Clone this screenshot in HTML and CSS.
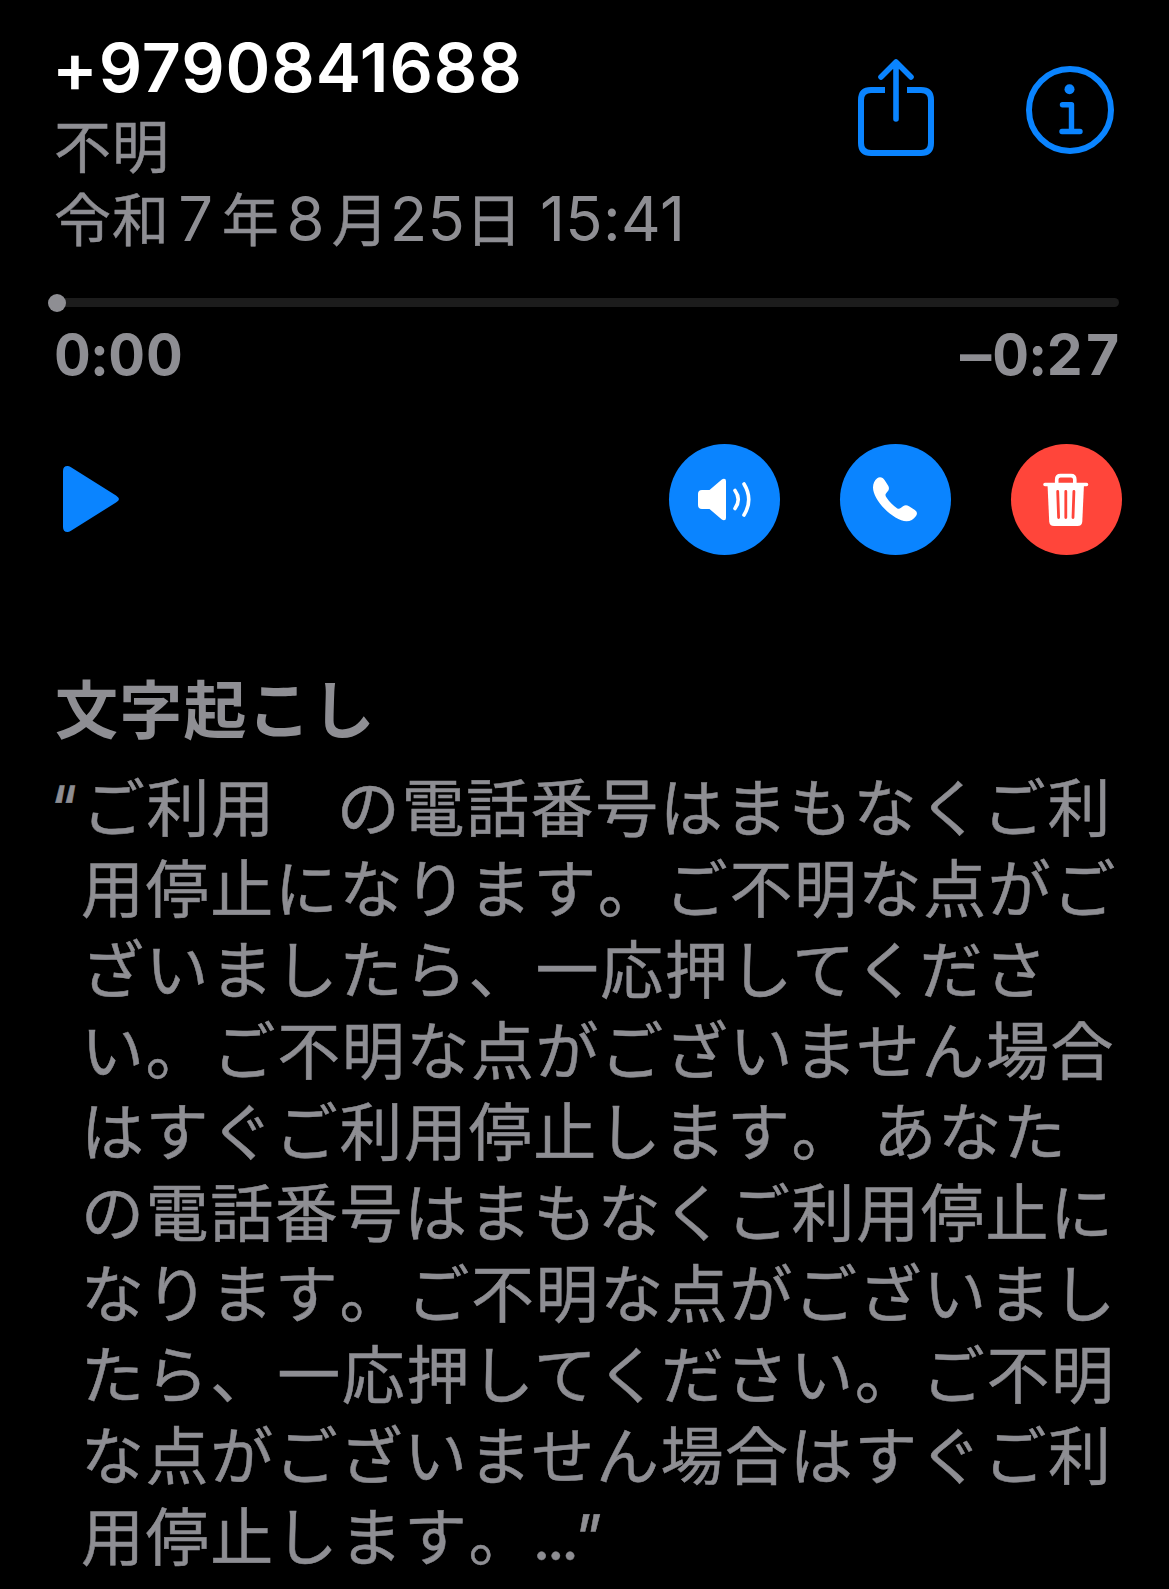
FILE: index.html
```html
<!DOCTYPE html>
<html lang="ja">
<head>
    <meta charset="UTF-8">
    <meta name="viewport" content="width=device-width, initial-scale=1.0">
    <title>留守番電話</title>
    <link rel="stylesheet" href="styles.css">
</head>
<body>
    <header class="header">
        <div class="caller">
            <h1 class="number">+9790841688</h1>
            <p class="label">不明</p>
            <p class="date">令和<span class="num one">7</span>年<span class="num one">8</span>月<span class="num">25</span>日<span class="num time">15:41</span></p>
        </div>
        <div class="links">
            <svg class="share" viewBox="0 0 76 98" fill="none" stroke="currentColor" stroke-width="6">
                <path d="M27 31H13Q3 31 3 41V84Q3 94 13 94H63Q73 94 73 84V41Q73 31 63 31H49"/>
                <path d="M38 60V4M23 18L38 3L53 18" stroke-width="5.6" stroke-linecap="round" stroke-linejoin="round"/>
            </svg>
            <svg class="info" viewBox="0 0 88 88" fill="none" stroke="currentColor" stroke-width="6">
                <circle cx="44" cy="44" r="41"/>
                <circle cx="43.5" cy="23.3" r="5" fill="currentColor" stroke="none"/>
                <path d="M36.5 38.7H45.5V65.5M36 65.5H54" stroke-width="5.4" stroke-linecap="round" stroke-linejoin="round"/>
            </svg>
        </div>
    </header>

    <div class="slider"><span class="knob"></span></div>
    <div class="times">
        <span>0:00</span>
        <span><span class="minus">–</span>0:27</span>
    </div>

    <div class="controls">
        <svg class="play" viewBox="0 0 56 66">
            <path d="M0 5Q0 0 4.500 0Q6 0 8 1.300L53 29.500Q56 31.500 56 33Q56 34.500 53 36.500L8 64.700Q6 66 4.500 66Q0 66 0 61Z" fill="currentColor"/>
        </svg>
        <div class="actions">
            <button class="action">
                <svg viewBox="0 0 111 111">
                    <path d="M33 46H40.500L52.500 35.800Q53.800 34.800 55 34.800Q57 34.800 57 37V74Q57 76.200 55 76.200Q53.800 76.200 52.500 75.200L40.500 65H33Q29 65 29 61V50Q29 46 33 46Z" fill="#fff"/>
                    <path d="M66 46.500Q72.500 55.500 66 64.500M75 40Q84.500 55.500 75 71" fill="none" stroke="#fff" stroke-width="3.600" stroke-linecap="round"/>
                </svg>
            </button>
            <button class="action">
                <svg viewBox="0 0 111 111">
                    <path d="M40 33.200C42 33.200 43.500 34.300 44.700 36.200L48.200 41.700C49.500 43.800 49 45.800 47.500 47.600L46 49.500C45 51 45.500 52 46.500 53.500C49.500 58 53 61.500 57 64.200C58.300 65 59.500 65 61 63.800L63 62.300C65 60.800 66.800 60.800 69 62.200L74.500 65.800C77.500 67.800 77.400 70 76 72C73.500 75.500 70.500 77.200 66.500 77.200C60 77.200 51 71.500 44.500 64.800C38 58 33 50 33 43.500C33 39.500 34.500 36.500 37.200 34.300C38 33.600 39 33.200 40 33.200Z" fill="#fff"/>
                </svg>
            </button>
            <button class="action delete">
                <svg viewBox="0 0 111 111">
                    <path d="M36.500 40H73L71.300 77.500Q71 82 66.500 82H43Q38.500 82 38.200 77.500Z" fill="#fff"/>
                    <path d="M34 40.500H75.500M45.700 40V35.500Q45.700 31.600 49.500 31.600H60Q63.800 31.600 63.800 35.500V40" fill="none" stroke="#fff" stroke-width="3.600" stroke-linecap="round"/>
                    <path d="M46.700 47.500L47.600 73.500M54.800 47.500V73.500M62.900 47.500L62 73.500" fill="none" stroke="#ff453a" stroke-width="2.800" stroke-linecap="round"/>
                </svg>
            </button>
        </div>
    </div>

    <h2 class="heading">文字起こし</h2>
    <p class="transcript"><span class="open">"</span>ご利用<span class="blank">　</span>の電話番号はまもなくご利<br>
        用停止になります<span class="stop">。</span>ご不明な点がご<br>
        ざいましたら<span class="comma">、</span>一応押してくださ<br>
        い<span class="stop">。</span>ご不明な点がございません場合<br>
        はすぐご利用停止します<span class="stop">。</span><span class="space"></span>あなた<br>
        の電話番号はまもなくご利用停止に<br>
        なります<span class="stop">。</span>ご不明な点がございまし<br>
        たら<span class="comma">、</span>一応押してください<span class="stop">。</span>ご不明<br>
        な点がございません場合はすぐご利<br>
        用停止します<span class="stop">。</span><span class="dots">...</span><span class="close">"</span></p>
</body>
</html>
```
FILE: styles.css
```css
body {
    margin: 0;
    height: 1589px;
    padding: 35px 47px 0 55px;
    box-sizing: border-box;
    overflow: hidden;
    background-color: #000;
    color: #8e8e93;
    font-family: Inter, "Noto Sans CJK JP", sans-serif;
}
h1, h2, p {
    margin: 0;
}
.header {
    display: flex;
    justify-content: space-between;
    height: 263px;
}
.number {
    margin-left: -3px;
    margin-top: -1px;
    color: #fff;
    font-size: 68px;
    font-weight: 600;
    line-height: 66px;
    letter-spacing: 0.9px;
}
.label, .date {
    font-size: 57px;
    line-height: 72px;
    letter-spacing: 0.9px;
    white-space: nowrap;
    margin-left: -1px;
    -webkit-text-stroke: 0.5px #8e8e93;
}
.label {
    margin-top: 12px;
}
.date {
    margin-top: 1px;
}
.num {
    font-size: 61.5px;
    line-height: 1;
    letter-spacing: 0.3px;
    -webkit-text-stroke: 0;
}
.one {
    display: inline-block;
    width: 52px;
    text-align: center;
}
.time {
    margin-left: 17px;
}
.links {
    display: flex;
    align-items: flex-start;
    gap: 92px;
    margin-right: 8px;
    color: #0a84ff;
}
.share {
    width: 76px;
    height: 98px;
    margin-top: 24px;
}
.info {
    width: 88px;
    height: 88px;
    margin-top: 31px;
}
.slider {
    position: relative;
    height: 9px;
    margin-right: 3px;
    border-radius: 5px;
    background-color: #1c1c1c;
}
.knob {
    position: absolute;
    left: -7px;
    top: -4px;
    width: 18px;
    height: 18px;
    border-radius: 50%;
    background-color: #8e8e93;
}
.times {
    display: flex;
    justify-content: space-between;
    margin: 13px 0 0 -1px;
    font-size: 57px;
    font-weight: 650;
    line-height: 70px;
    letter-spacing: 1px;
    font-variant-numeric: tabular-nums;
}
.minus {
    display: inline-block;
    transform: scaleX(1.1);
    transform-origin: right;
}
.controls {
    display: flex;
    justify-content: space-between;
    align-items: center;
    margin-top: 54px;
}
.play {
    width: 56px;
    height: 66px;
    margin: 0 0 2px 8px;
    color: #0a84ff;
}
.actions {
    display: flex;
    gap: 60px;
}
.action {
    width: 111px;
    height: 111px;
    padding: 0;
    border: none;
    border-radius: 50%;
    background-color: #0a84ff;
}
.action svg {
    display: block;
}
.delete {
    background-color: #ff453a;
}
.heading {
    margin-top: 115px;
    font-size: 63px;
    font-weight: 700;
    line-height: 80px;
    letter-spacing: 1.2px;
}
.transcript {
    margin-top: 18px;
    padding-left: 26px;
    font-size: 63px;
    line-height: 81px;
    letter-spacing: 1.6px;
    white-space: nowrap;
    -webkit-text-stroke: 0.5px #8e8e93;
}
.open, .close {
    display: inline-block;
    line-height: 1;
    letter-spacing: 0;
    transform: skewX(-12deg);
}
.open {
    width: 31px;
    margin-left: -30px;
    transform: skewX(-12deg) scaleY(-1);
    transform-origin: 50% 27%;
}
.blank {
    letter-spacing: -2px;
}
.stop {
    letter-spacing: 4px;
}
.comma {
    letter-spacing: 4px;
}
.space {
    display: inline-block;
    width: 15px;
}
.dots {
    margin-left: -3px;
    letter-spacing: -4px;
}
.close {
    margin-left: -3px;
}
```
